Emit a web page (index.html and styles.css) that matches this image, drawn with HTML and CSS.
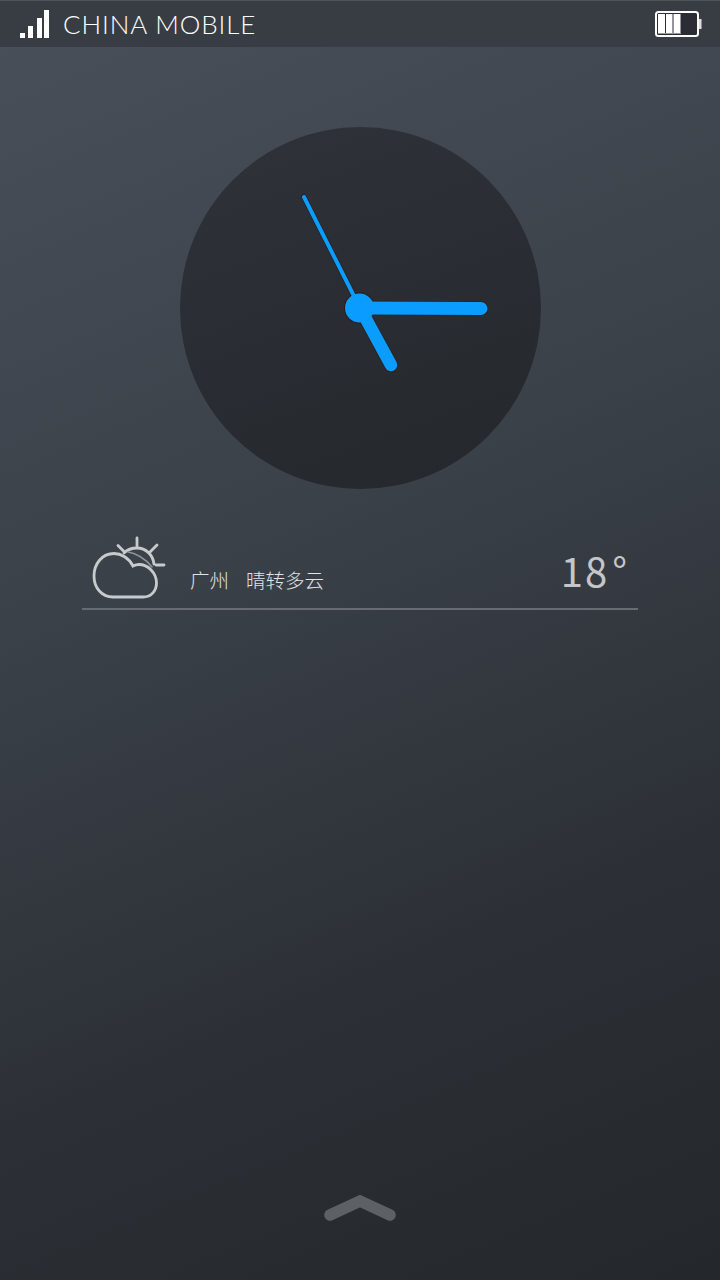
FILE: index.html
```html
<!DOCTYPE html>
<html lang="en">
<head>
  <meta charset="UTF-8">
  <title>Lock Screen</title>
  <link rel="stylesheet" href="styles.css">
</head>
<body>
  <!-- Status bar -->
  <header class="status-bar">
    <svg class="signal" width="30" height="28" viewBox="0 0 30 28">
      <rect x="0" y="23" width="5" height="5" fill="#fff"/>
      <rect x="8" y="16" width="5" height="12" fill="#fff"/>
      <rect x="17" y="8" width="5" height="20" fill="#fff"/>
      <rect x="24" y="0" width="5" height="28" fill="#fff"/>
    </svg>
    <span class="carrier">CHINA MOBILE</span>
    <svg class="battery" width="47" height="26" viewBox="0 0 47 26">
      <rect x="1" y="1" width="42" height="24" rx="2.5" fill="#2a2d33" stroke="#fff" stroke-width="2"/>
      <rect x="3" y="3" width="7" height="20" fill="#fff"/>
      <rect x="11" y="3" width="6.500" height="20" fill="#fff"/>
      <rect x="18.500" y="3" width="7" height="20" fill="#fff"/>
      <rect x="3" y="22" width="22.500" height="1" fill="#9a9a9a"/>
      <rect x="44" y="8" width="2.500" height="10" fill="#ddd"/>
    </svg>
  </header>

  <!-- Clock -->
  <div class="clock">
    <svg width="361" height="362" viewBox="180 127 361 362">
      <g fill="none" stroke-linecap="round">
        <g stroke="#2a1d1c">
          <line x1="360" y1="308" x2="304" y2="197" stroke-width="5.500"/>
          <line x1="360" y1="308" x2="481" y2="308.500" stroke-width="14.500"/>
          <line x1="360" y1="308" x2="391" y2="365" stroke-width="14"/>
        </g>
      </g>
      <circle cx="359.500" cy="308" r="15.500" fill="#2a1d1c"/>
      <g fill="none" stroke="#0a9cff" stroke-linecap="round">
        <line x1="360" y1="308" x2="304" y2="197" stroke-width="4"/>
        <line x1="360" y1="308" x2="481" y2="308.500" stroke-width="13"/>
        <line x1="360" y1="308" x2="391" y2="365" stroke-width="12.500"/>
      </g>
      <circle cx="359.500" cy="308" r="14.500" fill="#0a9cff"/>
    </svg>
  </div>

  <!-- Weather -->
  <section class="weather">
    <svg class="weather-icon" width="76" height="66" viewBox="91 535 76 66">
      <g fill="none" stroke="#c9cacb" stroke-width="2.800" stroke-linecap="round">
        <path d="M124 553 C128 549 132 548 137 548 C146 548 153 555 154 564"/>
        <path d="M128 552 C135 553 145 558 152 567" stroke-width="1.500" stroke="#8f9297"/>
        <path d="M137 538 V546 M118 545.500 L124.500 552 M157 545 L150 552 M156 565 H164"/>
        <path d="M113 597 H143 C152 597 156.500 590 156.500 583 C156.500 573 148 564.500 139 564.500 C137 564.500 135 565 133 566 C129 558 121 553.500 114 553.500 C102 553.500 94 564 94 576 C94 588 102 597 113 597 Z"/>
      </g>
    </svg>
    <span class="city">广州</span>
    <span class="condition">晴转多云</span>
    <span class="temp">18<span class="degree">°</span></span>
  </section>

  <!-- Unlock arrow -->
  <div class="unlock">
    <svg width="74" height="32" viewBox="323 1190 74 32">
      <polyline points="330,1215 360,1201 390,1215" fill="none" stroke="#5d6166" stroke-width="11.500" stroke-linecap="round"/>
    </svg>
  </div>
</body>
</html>
```

FILE: styles.css
```css
* {
  margin: 0;
  padding: 0;
  box-sizing: border-box;
}
body {
  width: 720px;
  height: 1280px;
  display: flex;
  flex-direction: column;
  overflow: hidden;
  background: linear-gradient(157deg, #48505a 0%, #3b4149 40%, #2c3036 72%, #24272b 100%);
  color: #fff;
  font-family: "Noto Sans CJK SC", "Noto Sans", sans-serif;
}
/* Status bar */
.status-bar {
  height: 47px;
  flex-shrink: 0;
  display: flex;
  align-items: center;
  padding: 0 18px 0 20px;
  background: #383d44;
  border-top: 1px solid #50545b;
}
.signal {
  margin-right: 13px;
}
.carrier {
  font-family: "Lato", sans-serif;
  font-weight: 300;
  font-size: 26px;
  letter-spacing: 0.9px;
  color: #fff;
}
.battery {
  margin-left: auto;
}
/* Clock */
.clock {
  width: 361px;
  height: 362px;
  margin: 80px auto 0;
  border-radius: 50%;
  background: linear-gradient(160deg, #2f3339 0%, #24272c 100%);
}
.clock svg {
  display: block;
}
/* Weather */
.weather {
  height: 75px;
  margin: 46px 82px 0;
  display: flex;
  align-items: flex-start;
  border-bottom: 2px solid #686c72;
  color: #e2e3e5;
}
.weather-icon {
  margin-left: 9px;
  flex-shrink: 0;
}
.city,
.condition {
  margin-top: 32px;
  font-size: 19.5px;
  font-weight: 300;
  line-height: 26px;
}
.city {
  margin-left: 23px;
}
.condition {
  margin-left: 17px;
}
.temp {
  margin-left: auto;
  margin-right: 9px;
  margin-top: 5px;
  font-size: 40px;
  line-height: 60px;
  font-weight: 400;
  letter-spacing: 2px;
  color: #c4c6c8;
}
.degree {
  margin-left: 3px;
}
/* Unlock arrow */
.unlock {
  margin-top: auto;
  margin-bottom: 58px;
  display: flex;
  justify-content: center;
}
.unlock svg {
  display: block;
}
```
